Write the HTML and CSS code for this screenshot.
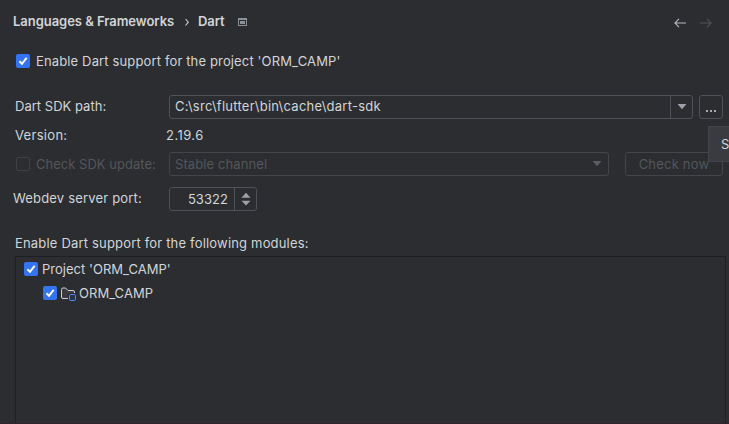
FILE: index.html
```
<!DOCTYPE html>
<html lang="en">
<head>
<meta charset="utf-8">
<title>Dart settings</title>
<link rel="stylesheet" href="styles.css">
</head>
<body>
<main class="settings">
  <header class="header">
    <span class="crumb crumb-parent">Languages &amp; Frameworks</span>
    <svg class="crumb-sep" width="6" height="10" viewBox="0 0 6 10"><path d="M1.5 2 4.3 5.2 1.5 8.500" fill="none" stroke="#ced0d6" stroke-width="1.1"/></svg>
    <span class="crumb crumb-current">Dart</span>
    <svg class="project-icon" width="9" height="8" viewBox="0 0 9 8"><path d="M0 0h9v8H0zM1 2v5h7V2z" fill="#8a9297" fill-rule="evenodd"/><path d="M2 3h5v3H2z" fill="#8a9297"/></svg>
    <nav class="history">
      <svg width="12" height="10" viewBox="0 0 12 10"><path d="M5 .8.9 5 5 9.2M1 5h11" fill="none" stroke="#b4b8bf" stroke-width="1.1"/></svg>
      <svg class="forward" width="12" height="10" viewBox="0 0 12 10"><path d="M7 .8 11.1 5 7 9.2M11 5H0" fill="none" stroke="#505257" stroke-width="1.1"/></svg>
    </nav>
  </header>

  <div class="row row-enable">
    <span class="check checked"><svg width="14" height="14" viewBox="0 0 14 14"><path d="M3.4 7.2 6 9.8 10.6 3.8"/></svg></span>
    <span class="label label-enable">Enable Dart support for the project 'ORM_CAMP'</span>
  </div>

  <div class="row row-sdk">
    <span class="label name label-sdk">Dart SDK path:</span>
    <div class="combo combo-sdk">
      <span class="combo-text text-path">C:\src\flutter\bin\cache\dart-sdk</span>
      <span class="combo-button"><svg width="10" height="6" viewBox="0 0 10 6"><path d="M.5 0h9L5 5.200z" fill="#9da0a8"/></svg></span>
    </div>
    <button class="browse"><i></i><i></i><i></i></button>
    <div class="tooltip">S</div>
  </div>

  <div class="row row-version">
    <span class="label name label-version">Version:</span>
    <span class="label value-version">2.19.6</span>
  </div>

  <div class="row row-update">
    <span class="check disabled"></span>
    <span class="label muted label-update">Check SDK update:</span>
    <div class="combo combo-channel">
      <span class="combo-text muted text-channel">Stable channel</span>
      <svg class="channel-arrow" width="10" height="6" viewBox="0 0 10 6"><path d="M.5 0h9L5 5.200z" fill="#5a5d63"/></svg>
    </div>
    <button class="check-now muted"><span>Check now</span></button>
  </div>

  <div class="row row-port">
    <span class="label name label-port">Webdev server port:</span>
    <div class="spinner">
      <span class="spinner-value">53322</span>
      <span class="spinner-buttons"><svg width="10" height="14" viewBox="0 0 10 14"><path d="M.5 5.700h9L5 .8zM.5 8.800h9L5 13.500z" fill="#9da0a8"/></svg></span>
    </div>
  </div>

  <div class="row row-modules"><span class="label label-modules">Enable Dart support for the following modules:</span></div>

  <section class="tree">
    <div class="node node-root">
      <span class="check checked"><svg width="14" height="14" viewBox="0 0 14 14"><path d="M3.4 7.2 6 9.8 10.6 3.8"/></svg></span>
      <span class="label label-project">Project 'ORM_CAMP'</span>
    </div>
    <div class="node node-child">
      <span class="check checked"><svg width="14" height="14" viewBox="0 0 14 14"><path d="M3.4 7.2 6 9.8 10.6 3.8"/></svg></span>
      <svg class="folder" width="16" height="15" viewBox="0 0 16 15"><path d="M7 11.500H2Q.5 11.500.5 10V2.500Q.5 1 2 1H4.600L7 3.500H12Q13.500 3.500 13.500 5V6" fill="#393b40" stroke="#ced0d6"/><rect x="7" y="6" width="9" height="9" fill="#2b2d30"/><rect x="8.500" y="7.500" width="6" height="6" rx="1.300" fill="#25324d" stroke="#548af7"/></svg>
      <span class="label label-module">ORM_CAMP</span>
    </div>
  </section>
</main>
</body>
</html>
```
FILE: styles.css
```
* { box-sizing: border-box; }
body {
  margin: 0;
  background: #2b2d30;
  color: #d3d5d9;
  font: 13px/16px Inter, sans-serif;
}
.settings {
  display: flex;
  flex-direction: column;
  width: 729px;
  height: 424px;
  overflow: hidden;
  border-bottom: 1px solid #30252d;
}
svg { display: block; flex: none; }
.header { display: flex; align-items: center; height: 44px; padding: 0 17px 0 13px; flex: none; }
.crumb { font-weight: 600; white-space: nowrap; padding-bottom: 2px; }
.crumb-parent { width: 161px; letter-spacing: -.04px; }
.crumb-sep { margin: 0 8px 0 10px; }
.crumb-current { width: 40px; letter-spacing: -.1px; }
.history { display: flex; gap: 14px; margin-left: auto; padding-top: 2px; }
.row { display: flex; align-items: center; flex: none; height: 24px; padding-left: 15px; position: relative; }
.label { white-space: nowrap; letter-spacing: .3px; }
.name { width: 154px; }
.muted { color: #54565b; }
.check { width: 14px; height: 14px; border-radius: 2px; flex: none; }
.checked { background: #3574f0; }
.checked path { fill: none; stroke: #fff; stroke-width: 2; }
.disabled { border: 1px solid #3e4045; }
.row-enable { padding-left: 16px; margin-top: 5px; gap: 6px; }
.label-enable { letter-spacing: .14px; }
.row-sdk { margin-top: 22px; }
.label-sdk { letter-spacing: .02px; padding-bottom: 2px; }
.combo { display: flex; align-items: center; height: 24px; border: 1px solid #4e5157; border-radius: 3px; }
.combo-sdk { width: 524px; }
.combo-text { flex: 1; padding: 0 0 2px 5px; white-space: nowrap; }
.text-path { letter-spacing: .25px; }
.text-channel { letter-spacing: .1px; padding-bottom: 0; }
.combo-button { display: flex; align-items: center; justify-content: center; width: 22px; height: 22px; border-left: 1px solid #4e5157; }
button { display: flex; align-items: center; justify-content: center; height: 24px; padding: 0; border: 1px solid #4e5157; border-radius: 3px; background: transparent; color: inherit; font: inherit; }
.browse { width: 24px; margin-left: 6px; gap: 2px; padding-top: 8px; }
.browse i { width: 2px; height: 2px; background: #a8abb0; }
.tooltip { position: absolute; z-index: 1; left: 708px; top: 31px; width: 40px; height: 36px; padding: 9px 12px; border: 1px solid #43454a; background: #393b40; }
.row-version { height: 16px; margin-top: 8px; }
.name.label-version { width: 151px; }
.value-version { letter-spacing: .45px; }
.row-update { padding-left: 16px; margin-top: 9px; }
.label-update { width: 133px; margin-left: 6px; letter-spacing: .02px; }
.combo-channel { width: 440px; border-color: #43454a; }
.channel-arrow { margin-right: 6px; }
.check-now { width: 98px; margin-left: 16px; border-color: #43454a; color: #54565b; letter-spacing: .2px; }
.row-port { margin-top: 11px; padding-left: 13px; }
.name.label-port { width: 156px; letter-spacing: .18px; padding-bottom: 2px; }
.spinner { display: flex; width: 88px; height: 24px; border: 1px solid #4e5157; border-radius: 3px; }
.spinner-value { width: 64px; line-height: 23px; padding-right: 6px; text-align: right; letter-spacing: .05px; }
.spinner-buttons { display: flex; align-items: center; justify-content: center; flex: 1; border-left: 1px solid #4e5157; }
.row-modules { height: 16px; margin-top: 24px; }
.label-modules { letter-spacing: .18px; }
.tree { flex: 1; width: 711px; margin: 5px 0 0 15px; border: 1px solid #1e1f22; border-bottom: 0; }
.node { display: flex; align-items: center; height: 24px; }
.node-root { padding-left: 8px; gap: 4px; }
.label-project { letter-spacing: .02px; }
.node-child { padding-left: 27px; }
.label-module { letter-spacing: .04px; }
.folder { margin: 2px 2px 0 4px; }
```
